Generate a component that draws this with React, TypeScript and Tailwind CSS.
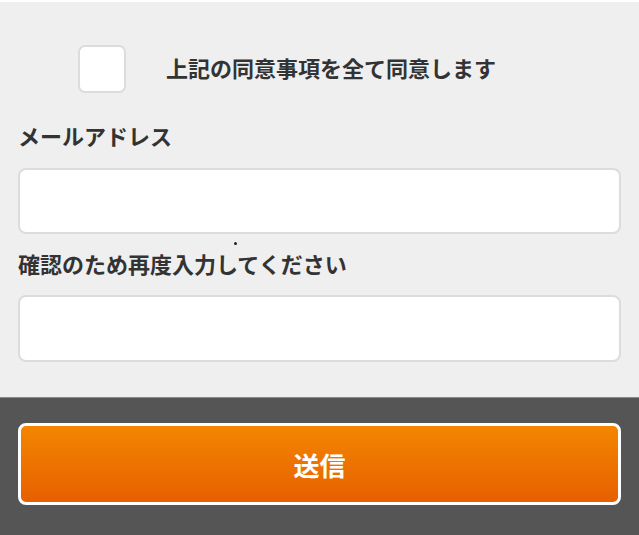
export default function App() {
  return (
    <div
      className="relative flex h-[535px] w-[639px] flex-col bg-[#efefef] text-[#333]"
      style={{ fontFamily: '"Noto Sans CJK JP", "Noto Sans", sans-serif' }}
    >
      <div className="h-[2px] bg-white" />

      {/* agreement + email fields */}
      <div className="flex flex-1 flex-col px-[18px] pt-[43px]">
        <label className="flex items-center gap-[40px] pl-[60px]">
          <span className="h-[48px] w-[48px] rounded-[7px] border-2 border-[#dcdcdc] bg-white" />
          <span className="pb-[4px] text-[22px] font-bold leading-[32px]">上記の同意事項を全て同意します</span>
        </label>

        <p className="mt-[26px] text-[22px] font-bold leading-[32px]">メールアドレス</p>
        <div className="mt-[17px] h-[66px] rounded-[8px] border-2 border-[#dcdcdc] bg-white" />

        <p className="mt-[13px] text-[22px] font-bold leading-[32px]">確認のため再度入力してください</p>
        <div className="mt-[16px] h-[67px] rounded-[8px] border-2 border-[#dcdcdc] bg-white" />
      </div>

      {/* stray dot */}
      <span className="absolute left-[234px] top-[242px] h-[3px] w-[3px] rounded-full bg-[#222]" />

      <div className="h-[138px] border-t border-[#8a8a8a] bg-[#555] px-[18px] pt-[25px]">
        <button className="flex h-[82px] w-full items-center justify-center rounded-[8px] border-[3px] border-white bg-gradient-to-b from-[#f38600] to-[#e75f00] text-[26px] font-bold text-white">
          送信
        </button>
      </div>
    </div>
  );
}
